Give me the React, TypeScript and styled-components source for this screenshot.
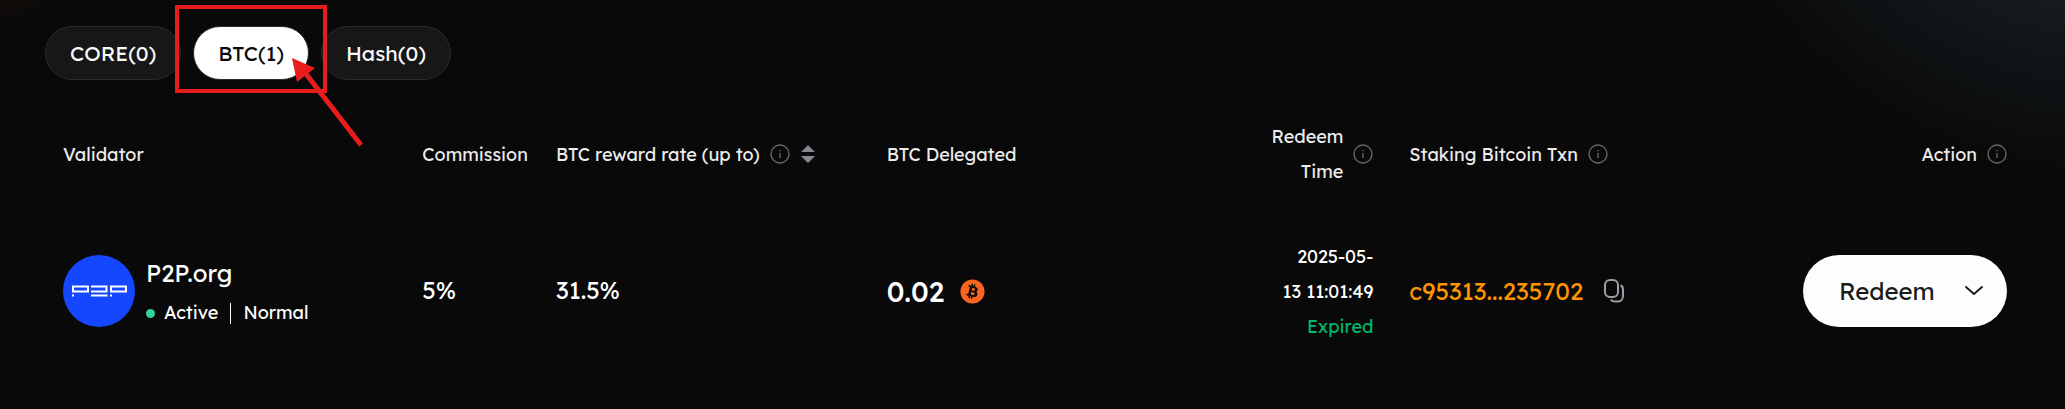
import React from "react";
import styled, { createGlobalStyle } from "styled-components";
import { FaBitcoin } from "react-icons/fa";

const Global = createGlobalStyle`
  *, *::before, *::after { box-sizing: border-box; }
  body {
    margin: 0;
    background: #090909;
    color: #fff;
    font-family: Lexend, Inter, "Liberation Sans", sans-serif;
  }
  button { font: inherit; cursor: pointer; }
`;

const Page = styled.main`
  min-height: 100vh;
  padding: 26px 40px 0 45px;
  background:
    radial-gradient(ellipse 450px 484px at calc(100% + 40px) -300px, #151b1f 62%, transparent 100%),
    radial-gradient(ellipse 90px 30px at 0 0, #100c0a 0%, transparent 100%);
`;

const Tabs = styled.nav`
  display: flex;
  gap: 12px;
`;

const Tab = styled.button<{ $active?: boolean }>`
  height: 54px;
  padding: 0 24px;
  border: 1px solid #2b2b2b;
  border-radius: 27px;
  background: ${(p) => (p.$active ? "#fff" : "#171717")};
  color: ${(p) => (p.$active ? "#090909" : "#fafafa")};
  font-size: 21px;
`;

const ActiveSlot = styled.div`
  position: relative;
`;

const Highlight = styled.span`
  position: absolute;
  inset: -21px -18px -13px;
  border: 4px solid #e81c1c;
  pointer-events: none;
`;

const Arrow = styled.svg`
  position: absolute;
  left: 98px;
  top: 30px;
  pointer-events: none;
`;

const Table = styled.table`
  width: 100%;
  margin-top: 30px;
  border-collapse: collapse;
  table-layout: fixed;
`;

const Col = styled.col<{ $w: string }>`
  width: ${(p) => p.$w};
`;

const Th = styled.th<{ $right?: boolean }>`
  height: 88px;
  padding: 0 18px;
  color: #ececec;
  font-size: 18px;
  font-weight: 400;
  line-height: 35px;
  text-align: ${(p) => (p.$right ? "right" : "left")};
`;

const Td = styled.td<{ $right?: boolean }>`
  height: 186px;
  padding: 0 18px;
  font-size: 18px;
  line-height: 35px;
  text-align: ${(p) => (p.$right ? "right" : "left")};
`;

const HeadLabel = styled.div<{ $right?: boolean }>`
  display: flex;
  align-items: center;
  justify-content: ${(p) => (p.$right ? "flex-end" : "flex-start")};
  gap: 10px;
  white-space: nowrap;
`;

const Sort = styled.button`
  display: flex;
  padding: 0;
  border: 0;
  background: none;
`;

const Validator = styled.div`
  display: flex;
  align-items: center;
  gap: 11px;
`;

const Identity = styled.div`
  padding-top: 4px;
`;

const Name = styled.div`
  font-size: 24px;
  line-height: 40px;
`;

const Status = styled.div`
  display: flex;
  align-items: center;
  line-height: 40px;
`;

const Dot = styled.i`
  width: 9px;
  height: 9px;
  margin-right: 9px;
  border-radius: 50%;
  background: #35d399;
`;

const Divider = styled.i`
  width: 1px;
  height: 21px;
  margin: 0 12px;
  background: #fff;
`;

const Percent = styled.span`
  font-size: 24px;
`;

const Amount = styled.div`
  display: flex;
  align-items: center;
  gap: 16px;
  font-size: 28px;
  font-weight: 500;
`;

const BitcoinMark = styled(FaBitcoin)`
  width: 25px;
  height: 25px;
  color: #f96420;
`;

const Expired = styled.div`
  color: #00b86b;
`;

const Txn = styled.div`
  display: flex;
  align-items: center;
  gap: 20px;
`;

const TxnLink = styled.a`
  color: #ff9500;
  font-size: 24px;
  text-decoration: none;
`;

const Copy = styled.button`
  display: flex;
  padding: 0;
  border: 0;
  background: none;
`;

const Redeem = styled.button`
  display: inline-flex;
  align-items: center;
  justify-content: space-between;
  width: 204px;
  height: 72px;
  padding: 0 23px 0 36px;
  border: 0;
  border-radius: 36px;
  background: #fcfdfd;
  color: #1c1c1c;
  font-size: 24px;
  vertical-align: middle;
`;

const Info = () => (
  <svg width="20" height="20" viewBox="0 0 20 20" fill="none" stroke="#6b6b6b" aria-hidden="true">
    <circle cx="10" cy="10" r="9" strokeWidth="1.3" />
    <path d="M10 9v5M10 6v1.3" strokeWidth="1.3" />
  </svg>
);

export default function App() {
  return (
    <>
      <Global />
      <Page>
        <Tabs aria-label="Delegation type">
          <Tab>CORE(0)</Tab>
          <ActiveSlot>
            <Tab $active aria-current="true">BTC(1)</Tab>
            <Highlight />
            <Arrow width="74" height="92" viewBox="0 0 74 92" aria-hidden="true">
              <path d="M12 14 70 89" stroke="#e81c1c" strokeWidth="5" />
              <path d="M1 2 24 12 6 26Z" fill="#e81c1c" />
            </Arrow>
          </ActiveSlot>
          <Tab>Hash(0)</Tab>
        </Tabs>
        <Table>
          <colgroup>
            <Col $w="18.15%" />
            <Col $w="6.75%" />
            <Col $w="16.7%" />
            <Col $w="18%" />
            <Col $w="8.4%" />
            <Col $w="19%" />
            <Col $w="13%" />
          </colgroup>
          <thead>
            <tr>
              <Th>Validator</Th>
              <Th>Commission</Th>
              <Th>
                <HeadLabel>
                  BTC reward rate (up to) <Info />
                  <Sort aria-label="Sort by reward rate">
                    <svg width="16" height="20" viewBox="0 0 16 20" fill="#85888e" aria-hidden="true">
                      <path d="M1 8 8 1l7 7zM1 12h14l-7 7z" />
                    </svg>
                  </Sort>
                </HeadLabel>
              </Th>
              <Th>BTC Delegated</Th>
              <Th $right>
                <HeadLabel $right>
                  <span>Redeem<br />Time</span> <Info />
                </HeadLabel>
              </Th>
              <Th><HeadLabel>Staking Bitcoin Txn <Info /></HeadLabel></Th>
              <Th $right><HeadLabel $right>Action <Info /></HeadLabel></Th>
            </tr>
          </thead>
          <tbody>
            <tr>
              <Td>
                <Validator>
                  <svg width="72" height="72" viewBox="0 0 72 72" fill="none" aria-hidden="true">
                    <circle cx="36" cy="36" r="36" fill="#1447ff" />
                    <path d="M10 31.500h15v5h-15zM28 31.500h15.500v5H28M28 40.500h16.500M48 31.500h15v5h-15zM9 40.500h2M47 40.500h2" stroke="#fff" strokeWidth="2" />
                  </svg>
                  <Identity>
                    <Name>P2P.org</Name>
                    <Status><Dot />Active<Divider />Normal</Status>
                  </Identity>
                </Validator>
              </Td>
              <Td><Percent>5%</Percent></Td>
              <Td><Percent>31.5%</Percent></Td>
              <Td>
                <Amount>
                  0.02
                  <BitcoinMark aria-hidden="true" />
                </Amount>
              </Td>
              <Td $right>2025-05-<br />13 11:01:49<Expired>Expired</Expired></Td>
              <Td>
                <Txn>
                  <TxnLink href="#txn">c95313...235702</TxnLink>
                  <Copy aria-label="Copy transaction">
                    <svg width="22" height="24" viewBox="0 0 22 24" fill="none" stroke="#9aa0a8" strokeWidth="2" aria-hidden="true">
                      <rect x="2" y="1" width="13" height="17" rx="5" />
                      <path d="M17.500 6.500c2 .5 2.500 2 2.500 4V17c0 3-2 5.500-5 5.500h-2.500c-2 0-4-.5-4.500-2" />
                    </svg>
                  </Copy>
                </Txn>
              </Td>
              <Td $right>
                <Redeem>
                  Redeem
                  <svg width="20" height="12" viewBox="0 0 20 12" fill="none" stroke="#1c1c1c" strokeWidth="2" aria-hidden="true">
                    <path d="m2 2 8 7 8-7" strokeLinecap="round" strokeLinejoin="round" />
                  </svg>
                </Redeem>
              </Td>
            </tr>
          </tbody>
        </Table>
      </Page>
    </>
  );
}
